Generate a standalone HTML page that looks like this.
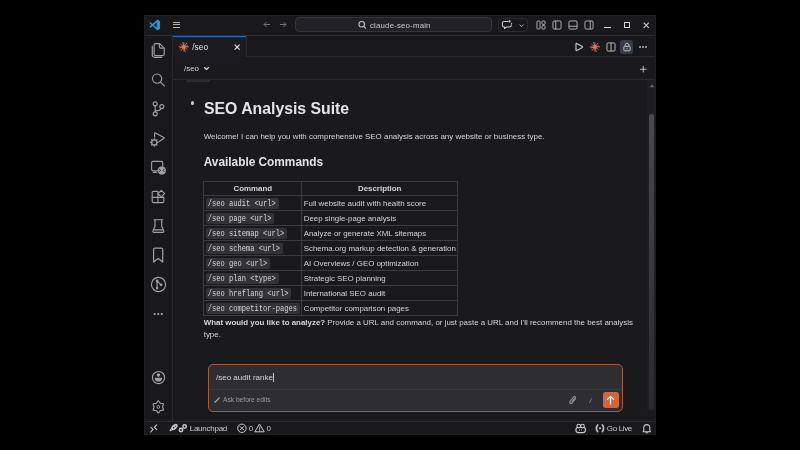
<!DOCTYPE html>
<html><head><meta charset="utf-8">
<style>
*{box-sizing:border-box;margin:0;padding:0}
html,body{width:800px;height:450px;background:#000;overflow:hidden;font-family:"Liberation Sans",sans-serif;position:relative}
.a{position:absolute}
svg.a{overflow:visible}
.t{position:absolute;white-space:nowrap}
body{will-change:transform}
</style></head>
<body>
<div class="a" style="left:144px;top:15px;width:512px;height:420px;background:#1a191c"></div>
<div class="a" style="left:144px;top:15px;width:512px;height:20px;background:#19181b"></div>
<div class="a" style="left:144px;top:35px;width:512px;height:1px;background:#2b2a2e"></div>
<div class="a" style="left:144px;top:36px;width:28px;height:385px;background:#19181b"></div>
<div class="a" style="left:172px;top:36px;width:1px;height:385px;background:#2b2a2e"></div>
<div class="a" style="left:173px;top:36px;width:483px;height:20px;background:#19181b"></div>
<div class="a" style="left:173px;top:56px;width:483px;height:1px;background:#2b2a2e"></div>
<div class="a" style="left:173px;top:36px;width:73px;height:21px;background:#1c1b1f"></div>
<div class="a" style="left:173px;top:35.6px;width:73px;height:1.3px;background:#1f74c4"></div>
<div class="a" style="left:245.6px;top:36px;width:1px;height:21px;background:#2b2a2e"></div>
<div class="a" style="left:173px;top:79px;width:483px;height:1px;background:#2b2a2e"></div>
<div class="a" style="left:144px;top:421px;width:512px;height:1px;background:#2b2a2e"></div>
<div class="a" style="left:144px;top:422px;width:512px;height:13px;background:#19181b"></div>
<svg class="a" style="left:0;top:0" width="800" height="450" viewBox="0 0 800 450"><path d="M157.5 20.6L150.3 27M157.5 29.4L150.3 23" stroke="#2a9ae8" stroke-width="1.5" stroke-linecap="round"/><path d="M157.2 20.2L159.6 21.3V28.7L157.2 29.8Z" fill="#2a9ae8" stroke="#2a9ae8" stroke-width="0.9" stroke-linejoin="round"/></svg>
<div class="a" style="left:172.8px;top:21.6px;width:7.5px;height:1px;background:#b4b4b4"></div>
<div class="a" style="left:172.8px;top:24.1px;width:7.5px;height:1px;background:#b4b4b4"></div>
<div class="a" style="left:172.8px;top:26.6px;width:7.5px;height:1px;background:#b4b4b4"></div>
<svg class="a" style="left:263px;top:20px;" width="8" height="9" viewBox="0 0 16 16"><path d="M14 8H2.5M7 3L2 8l5 5" stroke="#8b8b8b" stroke-width="1.6" fill="none"/></svg>
<svg class="a" style="left:279px;top:20px;" width="8" height="9" viewBox="0 0 16 16"><path d="M2 8h11.5M9 3l5 5-5 5" stroke="#8b8b8b" stroke-width="1.6" fill="none"/></svg>
<div class="a" style="left:295.3px;top:17.3px;width:196.7px;height:15px;background:#222125;border:1px solid #36353a;border-radius:4px"></div>
<svg class="a" style="left:0;top:0" width="800" height="450" viewBox="0 0 800 450"><circle cx="361.7" cy="24.3" r="2.75" stroke="#c4c4c4" stroke-width="1.1" fill="none"/><path d="M363.7 26.3L365.5 28.1" stroke="#c4c4c4" stroke-width="1.2" stroke-linecap="round"/></svg>
<div class="t" style="left:370px;top:19.55px;font-size:7.8px;line-height:11.7px;color:#cccccc;font-weight:normal;font-family:'Liberation Sans', sans-serif;letter-spacing:0.2px;">claude-seo-main</div>
<div class="a" style="left:498px;top:17.5px;width:30px;height:14.5px;border:1px solid #2b2b2b;border-radius:4px"></div>
<svg class="a" style="left:0;top:0" width="800" height="450" viewBox="0 0 800 450"><path d="M508 21.5H504A1.6 1.6 0 0 0 502.4 23.1V25.4A1.6 1.6 0 0 0 504 27H504.5V28.6L506.6 27H509.6A1.6 1.6 0 0 0 511.2 25.4V24.8" stroke="#cccccc" stroke-width="1.05" fill="none" stroke-linejoin="round" stroke-linecap="round"/><path d="M509.6 19.6L510.1 20.8L511.3 21.3L510.1 21.8L509.6 23L509.1 21.8L507.9 21.3L509.1 20.8Z" fill="#d8d8d8"/><circle cx="511.6" cy="23.6" r="0.65" fill="#d8d8d8"/></svg>
<svg class="a" style="left:518.6px;top:23.6px;" width="5.2" height="3.2" viewBox="0 0 10 6"><path d="M1 1l4 4 4-4" stroke="#cccccc" stroke-width="1.5" fill="none"/></svg>
<svg class="a" style="left:536px;top:20px;" width="10" height="10" viewBox="0 0 16 16"><rect x="1.5" y="1.5" width="5" height="13" rx="1.5" stroke="#cccccc" stroke-width="1.3" fill="none"/><rect x="9.5" y="1.5" width="5" height="5.5" rx="1.5" stroke="#cccccc" stroke-width="1.3" fill="none"/><rect x="9.5" y="9" width="5" height="5.5" rx="1.5" stroke="#cccccc" stroke-width="1.3" fill="none"/></svg>
<svg class="a" style="left:552px;top:20px;" width="10" height="10" viewBox="0 0 16 16"><rect x="1.5" y="1.5" width="13" height="13" rx="2" stroke="#cccccc" stroke-width="1.3" fill="none"/><path d="M6 1.5v13" stroke="#cccccc" stroke-width="1.3"/></svg>
<svg class="a" style="left:568px;top:20px;" width="10" height="10" viewBox="0 0 16 16"><rect x="1.5" y="1.5" width="13" height="13" rx="2" stroke="#cccccc" stroke-width="1.3" fill="none"/><path d="M1.5 10h13" stroke="#cccccc" stroke-width="1.3"/></svg>
<svg class="a" style="left:584px;top:20px;" width="10" height="10" viewBox="0 0 16 16"><rect x="1.5" y="1.5" width="13" height="13" rx="2" stroke="#cccccc" stroke-width="1.3" fill="none"/><path d="M10 1.5v13" stroke="#cccccc" stroke-width="1.3"/></svg>
<div class="a" style="left:604.2px;top:27px;width:6.4px;height:1.1px;background:#d8d8d8"></div>
<div class="a" style="left:623.8px;top:21.9px;width:6.3px;height:6.3px;border:1.45px solid #d8d8d8"></div>
<svg class="a" style="left:643px;top:22px;" width="6.5" height="6.5" viewBox="0 0 10 10"><path d="M1 1l8 8M9 1l-8 8" stroke="#cccccc" stroke-width="1.6"/></svg>
<svg class="a" style="left:0;top:0" width="800" height="450" viewBox="0 0 800 450"><path d="M155.5 43.6H159.6L164.2 48.2V54.2A1.4 1.4 0 0 1 162.8 55.6H155.5A1.4 1.4 0 0 1 154.1 54.2V45A1.4 1.4 0 0 1 155.5 43.6Z" stroke="#a0a0a0" stroke-width="1.15" fill="none" stroke-linejoin="round" stroke-linecap="round" /><path d="M159.3 43.8V46.8A1.3 1.3 0 0 0 160.6 48.1H164" stroke="#a0a0a0" stroke-width="1.15" fill="none" stroke-linejoin="round" stroke-linecap="round" /><path d="M152.3 46.2V55A2.4 2.4 0 0 0 154.7 57.4H161.6" stroke="#a0a0a0" stroke-width="1.15" fill="none" stroke-linejoin="round" stroke-linecap="round" /><path d="M157.1 78.6m-4.6 0a4.6 4.6 0 1 0 9.2 0a4.6 4.6 0 1 0 -9.2 0" stroke="#a0a0a0" stroke-width="1.15" fill="none" stroke-linejoin="round" stroke-linecap="round" /><path d="M160.6 82.1L164.4 85.9" stroke="#a0a0a0" stroke-width="1.3" fill="none" stroke-linejoin="round" stroke-linecap="round" /><path d="M155.2 103.8m-2 0a2 2 0 1 0 4 0a2 2 0 1 0 -4 0" stroke="#a0a0a0" stroke-width="1.15" fill="none" stroke-linejoin="round" stroke-linecap="round" /><path d="M161.8 106.6m-2 0a2 2 0 1 0 4 0a2 2 0 1 0 -4 0" stroke="#a0a0a0" stroke-width="1.15" fill="none" stroke-linejoin="round" stroke-linecap="round" /><path d="M155.2 113.8m-2 0a2 2 0 1 0 4 0a2 2 0 1 0 -4 0" stroke="#a0a0a0" stroke-width="1.15" fill="none" stroke-linejoin="round" stroke-linecap="round" /><path d="M155.2 105.8V111.8" stroke="#a0a0a0" stroke-width="1.15" fill="none" stroke-linejoin="round" stroke-linecap="round" /><path d="M161 108.5Q160.2 110.6 158 110.6H155.4" stroke="#a0a0a0" stroke-width="1.15" fill="none" stroke-linejoin="round" stroke-linecap="round" /><path d="M154.6 137V133.4Q154.6 132.4 155.5 132.9L163.8 137.5Q164.5 138 163.8 138.5L159.2 141.5" stroke="#a0a0a0" stroke-width="1.15" fill="none" stroke-linejoin="round" stroke-linecap="round" /><circle cx="154.3" cy="142.4" r="2.6" stroke="#a0a0a0" stroke-width="1.3" fill="none"/><path d="M154.3 138.6V139.4M150.5 142.4H151.3M157.3 142.4H158.1M151.6 139.7L152.2 140.3M157 139.7L156.4 140.3M151.6 145.1L152.2 144.5M157 145.1L156.4 144.5M154.3 145.4V146.2" stroke="#a0a0a0" stroke-width="1.1" fill="none" stroke-linejoin="round" stroke-linecap="round" /><path d="M158 170.7H153.1A1.5 1.5 0 0 1 151.6 169.2V162.8A1.5 1.5 0 0 1 153.1 161.3H161.2A1.5 1.5 0 0 1 162.7 162.8V166.3" stroke="#a0a0a0" stroke-width="1.15" fill="none" stroke-linejoin="round" stroke-linecap="round" /><path d="M153.3 172.4H156.6M155 170.7V172.4" stroke="#a0a0a0" stroke-width="1.15" fill="none" stroke-linejoin="round" stroke-linecap="round" /><circle cx="161.8" cy="170.6" r="4.1" fill="#a0a0a0"/><path d="M159.4 169.2L160.6 170.4L159.4 171.6M164.2 169.2L163 170.4L164.2 171.6" stroke="#1a191c" stroke-width="0.9" fill="none" stroke-linejoin="round" stroke-linecap="round" /><path d="M152.2 192.6A1.3 1.3 0 0 1 153.5 191.3H157.9V197.3H163.8V201.3A1.3 1.3 0 0 1 162.5 202.6H153.5A1.3 1.3 0 0 1 152.2 201.3Z" stroke="#a0a0a0" stroke-width="1.15" fill="none" stroke-linejoin="round" stroke-linecap="round" /><path d="M152.2 197.3H157.9V202.6" stroke="#a0a0a0" stroke-width="1.15" fill="none" stroke-linejoin="round" stroke-linecap="round" /><path d="M161.3 190.4L164.6 193.7L161.3 197L158 193.7Z" stroke="#a0a0a0" stroke-width="1.15" fill="none" stroke-linejoin="round" stroke-linecap="round" /><path d="M154 219.7H162.7" stroke="#a0a0a0" stroke-width="1.15" fill="none" stroke-linejoin="round" stroke-linecap="round" /><path d="M155 219.7V226.3L152.9 231A1 1 0 0 0 153.8 232.4H162.9A1 1 0 0 0 163.8 231L161.7 226.3V219.7" stroke="#a0a0a0" stroke-width="1.15" fill="none" stroke-linejoin="round" stroke-linecap="round" /><path d="M154.2 229.9H162.5" stroke="#a0a0a0" stroke-width="1.15" fill="none" stroke-linejoin="round" stroke-linecap="round" /><path d="M153.6 262V249.5A1.4 1.4 0 0 1 155 248.1H161.3A1.4 1.4 0 0 1 162.7 249.5V262L158.15 258.5Z" stroke="#a0a0a0" stroke-width="1.25" fill="none" stroke-linejoin="round" stroke-linecap="round" /><circle cx="158.5" cy="284.5" r="7.1" stroke="#a0a0a0" stroke-width="1.15" fill="none"/><path d="M157.1 280.9V288.1M157.1 280.9L161 284.8" stroke="#a0a0a0" stroke-width="1.15" fill="none" stroke-linejoin="round" stroke-linecap="round" /><circle cx="157.1" cy="280.9" r="1.35" fill="#a0a0a0"/><circle cx="157.1" cy="288.1" r="1.35" fill="#a0a0a0"/><circle cx="161" cy="284.8" r="1.35" fill="#a0a0a0"/><circle cx="154.6" cy="314" r="1.05" fill="#b4b4b4"/><circle cx="158.2" cy="314" r="1.05" fill="#b4b4b4"/><circle cx="161.8" cy="314" r="1.05" fill="#b4b4b4"/><circle cx="158.5" cy="377.6" r="6.1" stroke="#a0a0a0" stroke-width="1.2" fill="none"/><circle cx="158.4" cy="374.9" r="1.75" fill="#a0a0a0"/><path d="M154.7 377.7H162.1A3.7 3.9 0 0 1 154.7 377.7Z" fill="#a0a0a0"/><path d="M158.30 400.90 C159.02 400.90 159.58 402.68 160.45 403.18 C161.32 403.68 163.14 403.28 163.50 403.90 C163.85 404.52 162.60 405.90 162.60 406.90 C162.60 407.90 163.85 409.28 163.50 409.90 C163.14 410.52 161.32 410.12 160.45 410.62 C159.58 411.12 159.02 412.90 158.30 412.90 C157.58 412.90 157.02 411.12 156.15 410.62 C155.28 410.12 153.46 410.52 153.10 409.90 C152.75 409.28 154.00 407.90 154.00 406.90 C154.00 405.90 152.75 404.52 153.10 403.90 C153.46 403.28 155.28 403.68 156.15 403.18 C157.02 402.68 157.58 400.90 158.30 400.90Z" stroke="#a0a0a0" stroke-width="1.15" fill="none" stroke-linejoin="round" stroke-linecap="round" /><ellipse cx="158.3" cy="406.9" rx="1.3" ry="1.6" stroke="#a0a0a0" stroke-width="1.0" fill="none"/></svg>
<svg class="a" style="left:179.2px;top:42.1px;" width="9.8" height="9.8" viewBox="0 0 16 16"><path d="M9.20 8.00L15.60 8.00" stroke="#d97757" stroke-width="1.45" stroke-linecap="round"/><path d="M8.95 8.73L13.08 11.89" stroke="#d97757" stroke-width="1.45" stroke-linecap="round"/><path d="M8.31 9.16L10.03 15.53" stroke="#d97757" stroke-width="1.45" stroke-linecap="round"/><path d="M8.00 9.20L8.00 14.80" stroke="#d97757" stroke-width="1.45" stroke-linecap="round"/><path d="M7.27 8.95L3.50 13.87" stroke="#d97757" stroke-width="1.45" stroke-linecap="round"/><path d="M6.84 8.31L2.01 9.62" stroke="#d97757" stroke-width="1.45" stroke-linecap="round"/><path d="M6.80 8.00L0.10 8.00" stroke="#d97757" stroke-width="1.45" stroke-linecap="round"/><path d="M7.05 7.27L2.76 3.99" stroke="#d97757" stroke-width="1.45" stroke-linecap="round"/><path d="M7.69 6.84L6.05 0.76" stroke="#d97757" stroke-width="1.45" stroke-linecap="round"/><path d="M8.00 6.80L8.00 1.10" stroke="#d97757" stroke-width="1.45" stroke-linecap="round"/><path d="M8.73 7.05L12.68 1.89" stroke="#d97757" stroke-width="1.45" stroke-linecap="round"/><path d="M9.16 7.69L14.08 6.36" stroke="#d97757" stroke-width="1.45" stroke-linecap="round"/><circle cx="8" cy="8" r="2.9" fill="#e07a55"/></svg>
<div class="t" style="left:192.2px;top:42.01px;font-size:8.2px;line-height:12.3px;color:#e4e4e4;font-weight:normal;font-family:'Liberation Sans', sans-serif;letter-spacing:0.15px;">/seo</div>
<svg class="a" style="left:234px;top:44px;" width="6.3" height="6.3" viewBox="0 0 10 10"><path d="M1 1l8 8M9 1l-8 8" stroke="#dddddd" stroke-width="1.9"/></svg>
<svg class="a" style="left:0;top:0" width="800" height="450" viewBox="0 0 800 450"><path d="M576 43.9Q576 43 576.8 43.4L582.3 46.4Q583 46.9 582.3 47.4L576.8 50.5Q576 50.9 576 50Z" stroke="#c4c4c4" stroke-width="1.15" fill="none" stroke-linejoin="round"/></svg>
<svg class="a" style="left:590px;top:42px;" width="9.8" height="9.8" viewBox="0 0 16 16"><path d="M9.20 8.00L15.60 8.00" stroke="#d97757" stroke-width="1.45" stroke-linecap="round"/><path d="M8.95 8.73L13.08 11.89" stroke="#d97757" stroke-width="1.45" stroke-linecap="round"/><path d="M8.31 9.16L10.03 15.53" stroke="#d97757" stroke-width="1.45" stroke-linecap="round"/><path d="M8.00 9.20L8.00 14.80" stroke="#d97757" stroke-width="1.45" stroke-linecap="round"/><path d="M7.27 8.95L3.50 13.87" stroke="#d97757" stroke-width="1.45" stroke-linecap="round"/><path d="M6.84 8.31L2.01 9.62" stroke="#d97757" stroke-width="1.45" stroke-linecap="round"/><path d="M6.80 8.00L0.10 8.00" stroke="#d97757" stroke-width="1.45" stroke-linecap="round"/><path d="M7.05 7.27L2.76 3.99" stroke="#d97757" stroke-width="1.45" stroke-linecap="round"/><path d="M7.69 6.84L6.05 0.76" stroke="#d97757" stroke-width="1.45" stroke-linecap="round"/><path d="M8.00 6.80L8.00 1.10" stroke="#d97757" stroke-width="1.45" stroke-linecap="round"/><path d="M8.73 7.05L12.68 1.89" stroke="#d97757" stroke-width="1.45" stroke-linecap="round"/><path d="M9.16 7.69L14.08 6.36" stroke="#d97757" stroke-width="1.45" stroke-linecap="round"/><circle cx="8" cy="8" r="2.9" fill="#e07a55"/></svg>
<svg class="a" style="left:605.5px;top:42px;" width="10" height="10" viewBox="0 0 16 16"><rect x="1.5" y="1.5" width="13" height="13" rx="2" stroke="#cccccc" stroke-width="1.4" fill="none"/><path d="M8 1.5v13" stroke="#cccccc" stroke-width="1.4"/></svg>
<div class="a" style="left:620px;top:40px;width:13px;height:13.5px;background:#383c46;border-radius:3px"></div>
<svg class="a" style="left:621.5px;top:41.5px;" width="10" height="10" viewBox="0 0 16 16"><path d="M5 7V5a3 3 0 0 1 6 0v2" stroke="#cccccc" stroke-width="1.4" fill="none"/><rect x="3" y="7" width="10" height="7" rx="1" stroke="#cccccc" stroke-width="1.4" fill="none"/><path d="M8 9.5v2" stroke="#cccccc" stroke-width="1.4"/></svg>
<div class="a" style="left:639.3px;top:46.4px;width:1.3px;height:1.3px;background:#b0b0b0;border-radius:1px"></div>
<div class="a" style="left:642.3px;top:46.4px;width:1.3px;height:1.3px;background:#b0b0b0;border-radius:1px"></div>
<div class="a" style="left:645.3px;top:46.4px;width:1.3px;height:1.3px;background:#b0b0b0;border-radius:1px"></div>
<div class="a" style="left:173px;top:57px;width:483px;height:22px;background:#1a191c"></div>
<div class="t" style="left:184px;top:62.84px;font-size:7.9px;line-height:11.85px;color:#d0d0d0;font-weight:normal;font-family:'Liberation Sans', sans-serif;">/seo</div>
<svg class="a" style="left:204.2px;top:67.2px;" width="5" height="3" viewBox="0 0 10 6"><path d="M1 1l4 4 4-4" stroke="#d0d0d0" stroke-width="2.3" fill="none" stroke-linecap="round" stroke-linejoin="round"/></svg>
<svg class="a" style="left:640px;top:65.6px;" width="6.5" height="6.5" viewBox="0 0 10 10"><path d="M5 0v10M0 5h10" stroke="#cccccc" stroke-width="1.4"/></svg>
<div class="a" style="left:173px;top:79px;width:483px;height:1px;background:#2b2a2e"></div>
<div class="a" style="left:185.8px;top:79.5px;width:24.2px;height:2.7px;background:#2f2e32;border-radius:0 0 2.5px 2.5px"></div>
<div class="a" style="left:190.9px;top:101.4px;width:3.6px;height:3.6px;background:#c4c4c4;border-radius:50%"></div>
<div class="t" style="left:204px;top:97.08px;font-size:15.8px;line-height:23.7px;color:#e4e4e4;font-weight:bold;font-family:'Liberation Sans', sans-serif;">SEO Analysis Suite</div>
<div class="t" style="left:203.7px;top:131.18px;font-size:7.95px;line-height:11.93px;color:#d6d6d6;font-weight:normal;font-family:'Liberation Sans', sans-serif;">Welcome! I can help you with comprehensive SEO analysis across any website or business type.</div>
<div class="t" style="left:203.7px;top:153.51px;font-size:11.85px;line-height:17.77px;color:#e4e4e4;font-weight:bold;font-family:'Liberation Sans', sans-serif;">Available Commands</div>
<div class="a" style="left:203px;top:181px;width:255.2px;height:135px;border:1px solid #3c3c3c"></div>
<div class="a" style="left:203px;top:195px;width:255.2px;height:1px;background:#3c3c3c"></div>
<div class="a" style="left:203px;top:210px;width:255.2px;height:1px;background:#3c3c3c"></div>
<div class="a" style="left:203px;top:225px;width:255.2px;height:1px;background:#3c3c3c"></div>
<div class="a" style="left:203px;top:240px;width:255.2px;height:1px;background:#3c3c3c"></div>
<div class="a" style="left:203px;top:255px;width:255.2px;height:1px;background:#3c3c3c"></div>
<div class="a" style="left:203px;top:270px;width:255.2px;height:1px;background:#3c3c3c"></div>
<div class="a" style="left:203px;top:285px;width:255.2px;height:1px;background:#3c3c3c"></div>
<div class="a" style="left:203px;top:300px;width:255.2px;height:1px;background:#3c3c3c"></div>
<div class="a" style="left:301px;top:181px;width:1px;height:134px;background:#3c3c3c"></div>
<div class="t" style="left:233.5px;top:182.64px;font-size:7.9px;line-height:11.85px;color:#d6d6d6;font-weight:bold;font-family:'Liberation Sans', sans-serif;">Command</div>
<div class="t" style="left:358px;top:182.64px;font-size:7.9px;line-height:11.85px;color:#d6d6d6;font-weight:bold;font-family:'Liberation Sans', sans-serif;">Description</div>
<div class="a" style="left:205.5px;top:197.8px;width:73.16px;height:11px;background:#333236;border-radius:2px"></div>
<div class="t" style="left:207.7px;top:199.49px;font-size:7.1px;line-height:10.65px;color:#d8d8d8;font-weight:normal;font-family:'Liberation Mono', monospace;transform:scaleY(1.28);transform-origin:0 7.21px;">/seo audit &lt;url&gt;</div>
<div class="t" style="left:303.7px;top:198.14px;font-size:7.9px;line-height:11.85px;color:#d6d6d6;font-weight:normal;font-family:'Liberation Sans', sans-serif;">Full website audit with health score</div>
<div class="a" style="left:205.5px;top:212.8px;width:68.9px;height:11px;background:#333236;border-radius:2px"></div>
<div class="t" style="left:207.7px;top:214.49px;font-size:7.1px;line-height:10.65px;color:#d8d8d8;font-weight:normal;font-family:'Liberation Mono', monospace;transform:scaleY(1.28);transform-origin:0 7.21px;">/seo page &lt;url&gt;</div>
<div class="t" style="left:303.7px;top:213.14px;font-size:7.9px;line-height:11.85px;color:#d6d6d6;font-weight:normal;font-family:'Liberation Sans', sans-serif;">Deep single-page analysis</div>
<div class="a" style="left:205.5px;top:227.8px;width:81.67999999999999px;height:11px;background:#333236;border-radius:2px"></div>
<div class="t" style="left:207.7px;top:229.49px;font-size:7.1px;line-height:10.65px;color:#d8d8d8;font-weight:normal;font-family:'Liberation Mono', monospace;transform:scaleY(1.28);transform-origin:0 7.21px;">/seo sitemap &lt;url&gt;</div>
<div class="t" style="left:303.7px;top:228.14px;font-size:7.9px;line-height:11.85px;color:#d6d6d6;font-weight:normal;font-family:'Liberation Sans', sans-serif;">Analyze or generate XML sitemaps</div>
<div class="a" style="left:205.5px;top:242.8px;width:77.41999999999999px;height:11px;background:#333236;border-radius:2px"></div>
<div class="t" style="left:207.7px;top:244.49px;font-size:7.1px;line-height:10.65px;color:#d8d8d8;font-weight:normal;font-family:'Liberation Mono', monospace;transform:scaleY(1.28);transform-origin:0 7.21px;">/seo schema &lt;url&gt;</div>
<div class="t" style="left:303.7px;top:243.14px;font-size:7.9px;line-height:11.85px;color:#d6d6d6;font-weight:normal;font-family:'Liberation Sans', sans-serif;">Schema.org markup detection &amp; generation</div>
<div class="a" style="left:205.5px;top:257.8px;width:64.63999999999999px;height:11px;background:#333236;border-radius:2px"></div>
<div class="t" style="left:207.7px;top:259.49px;font-size:7.1px;line-height:10.65px;color:#d8d8d8;font-weight:normal;font-family:'Liberation Mono', monospace;transform:scaleY(1.28);transform-origin:0 7.21px;">/seo geo &lt;url&gt;</div>
<div class="t" style="left:303.7px;top:258.14px;font-size:7.9px;line-height:11.85px;color:#d6d6d6;font-weight:normal;font-family:'Liberation Sans', sans-serif;">AI Overviews / GEO optimization</div>
<div class="a" style="left:205.5px;top:272.8px;width:73.16px;height:11px;background:#333236;border-radius:2px"></div>
<div class="t" style="left:207.7px;top:274.49px;font-size:7.1px;line-height:10.65px;color:#d8d8d8;font-weight:normal;font-family:'Liberation Mono', monospace;transform:scaleY(1.28);transform-origin:0 7.21px;">/seo plan &lt;type&gt;</div>
<div class="t" style="left:303.7px;top:273.14px;font-size:7.9px;line-height:11.85px;color:#d6d6d6;font-weight:normal;font-family:'Liberation Sans', sans-serif;">Strategic SEO planning</div>
<div class="a" style="left:205.5px;top:287.8px;width:85.94px;height:11px;background:#333236;border-radius:2px"></div>
<div class="t" style="left:207.7px;top:289.49px;font-size:7.1px;line-height:10.65px;color:#d8d8d8;font-weight:normal;font-family:'Liberation Mono', monospace;transform:scaleY(1.28);transform-origin:0 7.21px;">/seo hreflang &lt;url&gt;</div>
<div class="t" style="left:303.7px;top:288.14px;font-size:7.9px;line-height:11.85px;color:#d6d6d6;font-weight:normal;font-family:'Liberation Sans', sans-serif;">International SEO audit</div>
<div class="a" style="left:205.5px;top:302.8px;width:94.46px;height:11px;background:#333236;border-radius:2px"></div>
<div class="t" style="left:207.7px;top:304.49px;font-size:7.1px;line-height:10.65px;color:#d8d8d8;font-weight:normal;font-family:'Liberation Mono', monospace;transform:scaleY(1.28);transform-origin:0 7.21px;">/seo competitor-pages</div>
<div class="t" style="left:303.7px;top:303.14px;font-size:7.9px;line-height:11.85px;color:#d6d6d6;font-weight:normal;font-family:'Liberation Sans', sans-serif;">Competitor comparison pages</div>
<div class="t" style="left:203.7px;top:316.81px;font-size:7.93px;line-height:11.89px;color:#d6d6d6;font-weight:normal;font-family:'Liberation Sans', sans-serif;"><b>What would you like to analyze?</b> Provide a URL and command, or just paste a URL and I'll recommend the best analysis</div>
<div class="t" style="left:203.7px;top:328.81px;font-size:7.93px;line-height:11.89px;color:#d6d6d6;font-weight:normal;font-family:'Liberation Sans', sans-serif;">type.</div>
<div class="a" style="left:646.8px;top:80px;width:9.2px;height:331px;background:#1e1d21"></div>
<div class="a" style="left:648.8px;top:114.4px;width:5.4px;height:296px;background:linear-gradient(#4a494d,#3a393d 50%,#2a292d);border-radius:2.7px"></div>
<svg class="a" style="left:648.8px;top:83.5px;" width="6" height="3.2" viewBox="0 0 8 5"><path d="M0 5L4 0l4 5z" fill="#5a595d"/></svg>
<div class="a" style="left:207.5px;top:364.2px;width:415px;height:48.3px;background:#2e2d31;border:1px solid #a35c3d;border-radius:5px"></div>
<div class="a" style="left:208.5px;top:388.7px;width:413px;height:1px;background:#39383c"></div>
<div class="t" style="left:216px;top:371.73px;font-size:8px;line-height:12.0px;color:#d6d6d6;font-weight:normal;font-family:'Liberation Sans', sans-serif;">/seo audit ranke</div>
<div class="a" style="left:272.6px;top:372.6px;width:0.8px;height:9px;background:#c8c8c8"></div>
<svg class="a" style="left:0;top:0" width="800" height="450" viewBox="0 0 800 450"><path d="M215 402.2L219.3 397.9" stroke="#a8a8a8" stroke-width="1.3" stroke-linecap="round"/></svg>
<div class="t" style="left:223px;top:395.41px;font-size:6.65px;line-height:9.98px;color:#9d9d9d;font-weight:normal;font-family:'Liberation Sans', sans-serif;">Ask before edits</div>
<svg class="a" style="left:589.3px;top:398.3px;" width="3.3" height="5.2" viewBox="0 0 4 6"><path d="M3.5 0L0.5 6" stroke="#8b8b8b" stroke-width="0.9"/></svg>
<div class="a" style="left:602.5px;top:392.2px;width:16px;height:16px;background:#d4643c;border-radius:2.5px"></div>
<svg class="a" style="left:0;top:0" width="800" height="450" viewBox="0 0 800 450"><path d="M610.5 404V396.3M607.3 399.5L610.5 396.3L613.7 399.5" stroke="#f4f4f4" stroke-width="1.1" fill="none" stroke-linecap="round" stroke-linejoin="round"/><path d="M575.6 398.6L571.9 403.1A1.25 1.25 0 0 1 569.9 401.6L573.9 396.7A0.9 0.9 0 0 1 575.3 397.8L572.2 401.6" stroke="#8f8f8f" stroke-width="1.2" fill="none" stroke-linecap="round"/></svg>
<svg class="a" style="left:0;top:0" width="800" height="450" viewBox="0 0 800 450"><path d="M150.9 427.4L153.1 429.3L150.7 432M156.7 424.9L154.3 427.2L156.7 429.7" stroke="#cccccc" stroke-width="1.1" fill="none" stroke-linejoin="round" stroke-linecap="round"/><ellipse cx="174.4" cy="427" rx="2.3" ry="3.9" transform="rotate(45 174.4 427)" fill="#c8c8c8"/><path d="M170.3 428.4L169.4 431.3L172.3 430.6Z" fill="#c8c8c8"/><circle cx="173.6" cy="427.8" r="0.8" fill="#19181b"/><circle cx="175.3" cy="426.1" r="0.6" fill="#19181b"/><circle cx="181" cy="430" r="1.7" stroke="#c8c8c8" stroke-width="1.5" fill="none"/><circle cx="184.6" cy="426.5" r="1.7" stroke="#c8c8c8" stroke-width="1.5" fill="none"/><circle cx="241.9" cy="428.3" r="4.2" stroke="#ccc" stroke-width="1.0" fill="none"/><path d="M240.2 426.6L243.6 430M243.6 426.6L240.2 430" stroke="#cccccc" stroke-width="1.0" fill="none" stroke-linejoin="round" stroke-linecap="round"/><path d="M259.7 424.4L264.2 431.8H255.2Z" stroke="#cccccc" stroke-width="1.0" fill="none" stroke-linejoin="round" stroke-linecap="round"/><path d="M259.7 427V429.3M259.7 430.6V430.7" stroke="#cccccc" stroke-width="0.9" fill="none" stroke-linejoin="round" stroke-linecap="round"/><rect x="575.9" y="427.3" width="9.6" height="5.3" rx="2.6" stroke="#cfcfcf" stroke-width="1.1" fill="#19181b"/><circle cx="578.7" cy="426.1" r="1.8" stroke="#cfcfcf" stroke-width="1.1" fill="#19181b"/><circle cx="582.5" cy="426.1" r="1.8" stroke="#cfcfcf" stroke-width="1.1" fill="#19181b"/><rect x="579.3" y="429.3" width="0.7" height="1.3" fill="#cfcfcf"/><rect x="581.1" y="429.3" width="0.7" height="1.3" fill="#cfcfcf"/><circle cx="600" cy="428.3" r="1.0" fill="#c8c8c8"/><path d="M597.6 425Q595.2 428.3 597.6 431.6" stroke="#c0c0c0" stroke-width="1.7" fill="none" stroke-linecap="round"/><path d="M602.4 425Q604.8 428.3 602.4 431.6" stroke="#c0c0c0" stroke-width="1.7" fill="none" stroke-linecap="round"/><path d="M643.8 431V427.6A3 3 0 0 1 649.8 427.6V431L650.6 431.8H643Z" stroke="#cccccc" stroke-width="1.05" fill="none" stroke-linejoin="round" stroke-linecap="round"/><path d="M645.9 432.8H647.7" stroke="#cccccc" stroke-width="1.0" fill="none" stroke-linejoin="round" stroke-linecap="round"/></svg>
<div class="t" style="left:189.7px;top:422.63px;font-size:8.0px;line-height:12.0px;color:#cccccc;font-weight:normal;font-family:'Liberation Sans', sans-serif;letter-spacing:-0.25px;">Launchpad</div>
<div class="t" style="left:248.7px;top:422.63px;font-size:8.0px;line-height:12.0px;color:#cccccc;font-weight:normal;font-family:'Liberation Sans', sans-serif;">0</div>
<div class="t" style="left:266.6px;top:422.63px;font-size:8.0px;line-height:12.0px;color:#cccccc;font-weight:normal;font-family:'Liberation Sans', sans-serif;">0</div>
<div class="t" style="left:606.8px;top:422.73px;font-size:8.0px;line-height:12.0px;color:#cccccc;font-weight:normal;font-family:'Liberation Sans', sans-serif;letter-spacing:-0.35px;">Go Live</div>
<div class="a" style="left:144px;top:15px;width:512px;height:420px;border:1px solid #201f23;background:transparent"></div>
</body></html>
